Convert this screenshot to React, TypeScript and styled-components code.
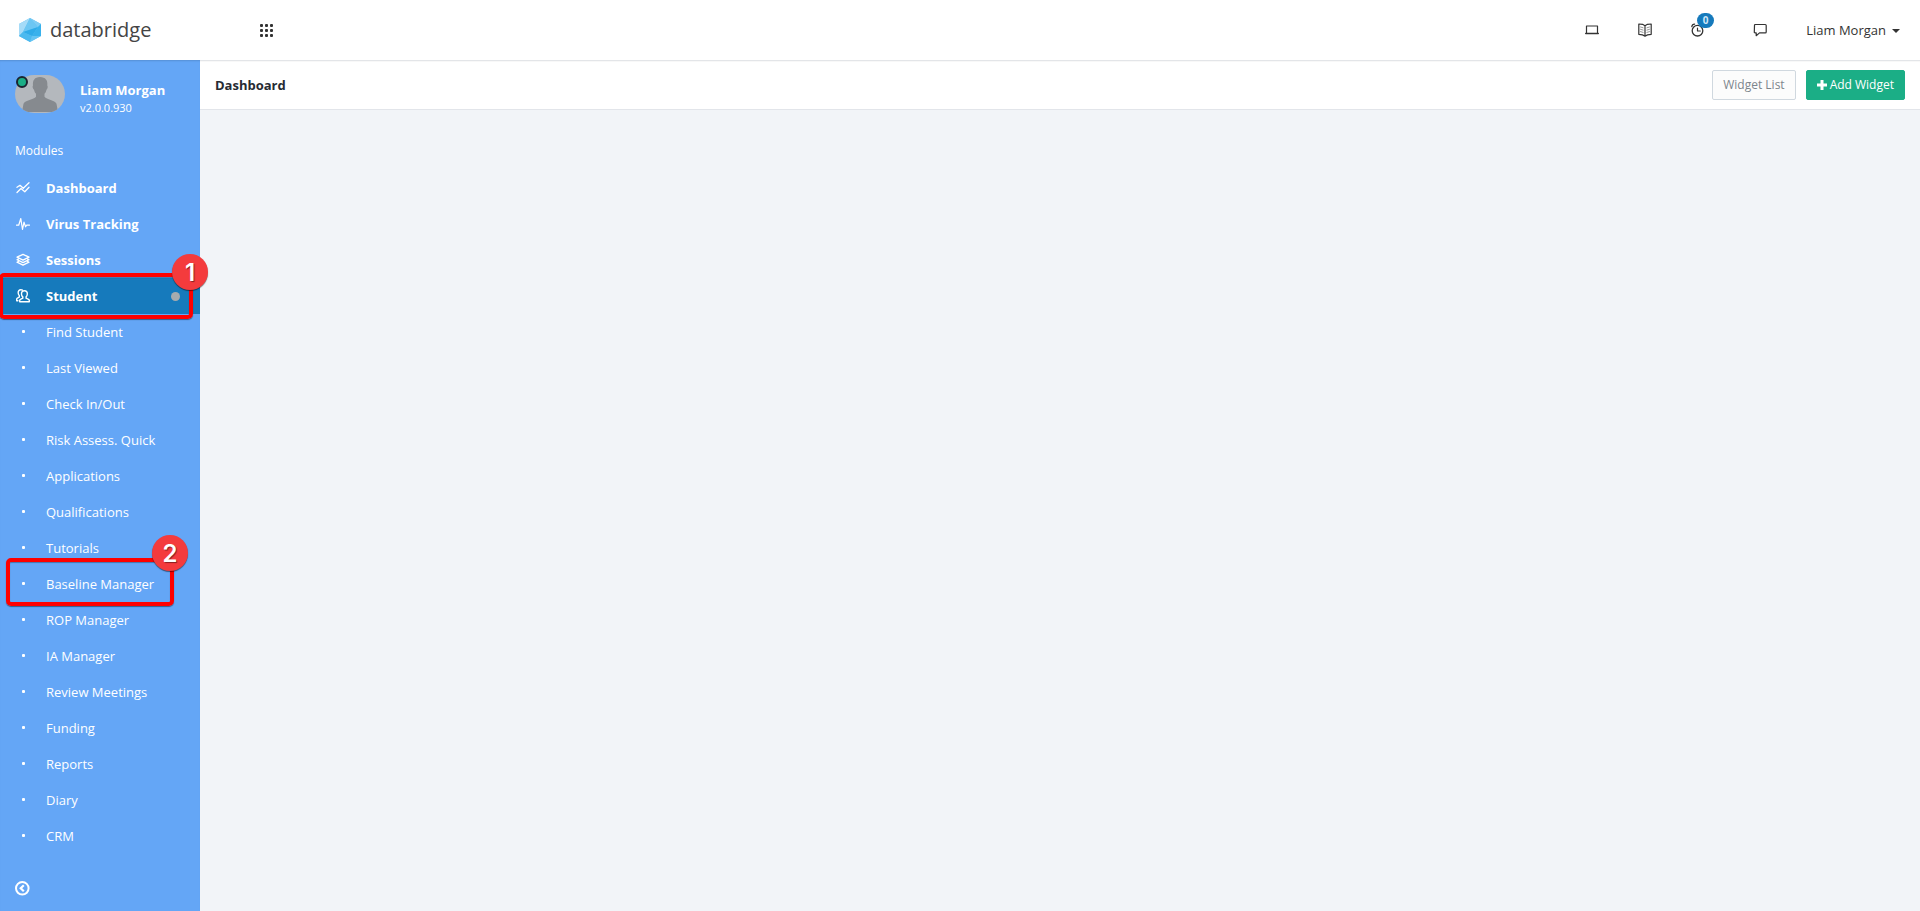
import React from 'react';
import styled, { createGlobalStyle, css } from 'styled-components';

const GlobalStyle = createGlobalStyle`
  *, *::before, *::after { box-sizing: border-box; }
  body {
    margin: 0;
    background: #f2f4f8;
    color: #333;
    font: 13px/20px 'Open Sans', 'Noto Sans', sans-serif;
  }
  button { font: inherit; color: inherit; cursor: pointer; }
  a { color: inherit; text-decoration: none; }
  svg { display: block; flex: none; }
`;

const Page = styled.div`
  display: flex;
  flex-direction: column;
  min-height: 100vh;
`;

const Header = styled.header`
  display: flex;
  align-items: center;
  height: 60px;
  padding-right: 20px;
  background: #fff;
`;

const Brand = styled.a`
  display: flex;
  align-items: center;
  gap: 8px;
  width: 200px;
  padding-left: 18px;
  font-size: 20px;
  line-height: 28px;
  color: #444;
`;

const IconButton = styled.button`
  display: flex;
  position: relative;
  padding: 0;
  border: 0;
  background: none;
  color: #333;
`;

const AppsButton = styled(IconButton)`
  margin-left: 60px;
`;

const HeaderTools = styled.div`
  display: flex;
  align-items: center;
  gap: 39px;
  margin-left: auto;
`;

const AlertButton = styled(IconButton)`
  margin-right: 9px;
`;

const Counter = styled.span`
  position: absolute;
  left: 6px;
  top: -10px;
  width: 17px;
  height: 15px;
  border-radius: 8px;
  background: #167abc;
  color: #cfe6f7;
  font-size: 10px;
  font-weight: 700;
  line-height: 15px;
  text-align: center;
`;

const UserMenu = styled.button`
  display: flex;
  align-items: center;
  gap: 6px;
  padding: 0;
  border: 0;
  background: none;
`;

const Caret = styled.span`
  margin-top: 2px;
  border: 4px solid transparent;
  border-top-color: currentColor;
  border-bottom: 0;
`;

const Body = styled.div`
  display: flex;
  flex: 1;
`;

const Sidebar = styled.aside`
  display: flex;
  flex-direction: column;
  flex: none;
  width: 200px;
  background: #64a6f6;
  box-shadow: inset 0 2px 2px -1px rgba(0, 0, 0, 0.14);
  color: #fff;
`;

const Profile = styled.div`
  display: flex;
  gap: 15px;
  padding: 15px 15px 0;
`;

const Avatar = styled.div`
  position: relative;
  width: 50px;
  height: 38px;
`;

const Status = styled.span`
  position: absolute;
  left: 1px;
  top: 1px;
  width: 12px;
  height: 12px;
  border: 2px solid #1b2430;
  border-radius: 50%;
  background: #1bae86;
`;

const ProfileText = styled.div`
  padding-top: 5px;
  font-size: 11px;
  line-height: 16px;
`;

const ProfileName = styled.strong`
  display: block;
  font-size: 13px;
  line-height: 20px;
`;

const NavHeading = styled.h2`
  margin: 25px 0 9px;
  padding: 0 15px;
  font-size: 12px;
  font-weight: 400;
  line-height: 20px;
  color: #fff;
`;

const NavList = styled.ul`
  margin: 0;
  padding: 0;
  list-style: none;
`;

const NavItem = styled.li`
  position: relative;
`;

const NavLink = styled.a<{ $module?: boolean; $active?: boolean }>`
  display: flex;
  align-items: center;
  gap: 15px;
  height: 36px;
  padding: 0 20px 0 15px;
  ${(p) => p.$module && css`font-weight: 700;`}
  ${(p) => p.$active && css`background: #167abc;`}
`;

const NavIcon = styled.span`
  display: flex;
  justify-content: center;
  width: 16px;
`;

const Bullet = styled.span`
  width: 3px;
  height: 3px;
  margin-bottom: 2px;
  border-radius: 1px;
  background: #fff;
`;

const ActiveDot = styled.span`
  width: 9px;
  height: 9px;
  margin-left: auto;
  border-radius: 50%;
  background: #a7abae;
`;

const Callout = styled.span<{ $left: number; $width: number; $top: number; $height: number }>`
  position: absolute;
  z-index: 2;
  left: ${(p) => p.$left}px;
  top: ${(p) => p.$top}px;
  width: ${(p) => p.$width}px;
  height: ${(p) => p.$height}px;
  border: 4px solid #fe0000;
  border-radius: 5px;
  box-shadow: 0 1px 1px rgba(0, 0, 0, 0.45), inset 0 1px 1px rgba(0, 0, 0, 0.3);
  pointer-events: none;
`;

const CalloutNumber = styled.span<{ $left: number; $top: number }>`
  position: absolute;
  z-index: 3;
  left: ${(p) => p.$left}px;
  top: ${(p) => p.$top}px;
  width: 36px;
  height: 36px;
  border-radius: 50%;
  background: #f43b3d;
  box-shadow: 0 1px 1px rgba(0, 0, 0, 0.5);
  color: #fff;
  font: 600 24px/38px Inter, 'Liberation Sans', sans-serif;
  text-align: center;
  text-shadow: 1px 1px 1px rgba(0, 0, 0, 0.45);
  pointer-events: none;
`;

const SidebarFooter = styled.div`
  display: flex;
  margin-top: auto;
  padding: 15px;
`;

const CollapseButton = styled(IconButton)`
  color: #fff;
`;

const Main = styled.main`
  flex: 1;
  min-width: 0;
`;

const TitleBar = styled.div`
  display: flex;
  align-items: center;
  gap: 10px;
  height: 50px;
  padding: 0 15px;
  border-top: 1px solid #e3e5e8;
  border-bottom: 1px solid #e2e5ea;
  background: #fff;
  box-shadow: inset 0 1px 1px rgba(0, 0, 0, 0.03);
`;

const Title = styled.h1`
  margin: 0 auto 0 0;
  font-size: 13px;
  line-height: 20px;
  color: #262b33;
`;

const Button = styled.button<{ $primary?: boolean }>`
  display: flex;
  align-items: center;
  gap: 3px;
  height: 30px;
  padding: 0 10px;
  border: 1px solid ${(p) => (p.$primary ? '#1bae86' : '#d0d8df')};
  border-radius: 2px;
  background: ${(p) => (p.$primary ? '#1bae86' : '#fcfcfc')};
  color: ${(p) => (p.$primary ? '#fff' : '#7d858c')};
  font-size: 12px;
`;

const line = { fill: 'none', stroke: 'currentColor', strokeLinejoin: 'round', strokeLinecap: 'round' } as const;

const Logo = () => (
  <svg width="24" height="26" viewBox="0 0 24 26" aria-hidden="true">
    <path d="M12 1 23 7v12l-11 6L1 19V7z" fill="#5bc0f1" />
    <path d="M12 1 1 7v12l4-4z" fill="#a5dbf8" />
    <path d="M12 1 5 15l15-5z" fill="#6cc6f3" />
    <path d="M12 1 23 7l-3 3z" fill="#7fccf4" />
    <path d="M5 15 20 10l-6 9z" fill="#2fabe9" />
    <path d="M5 15 1 19l11 6 2-6z" fill="#4bb9ef" />
    <path d="M20 10 23 7v12l-9 0z" fill="#38b1ec" />
    <path d="M14 19h9l-11 6z" fill="#64c4f3" />
  </svg>
);

const AppsIcon = () => (
  <svg width="13" height="13" viewBox="0 0 13 13" fill="#333" aria-hidden="true">
    {[0, 5, 10].map((y) => [0, 5, 10].map((x) => <rect key={`${x}-${y}`} x={x} y={y} width="3" height="3" rx="1" />))}
  </svg>
);

const ScreenIcon = () => (
  <svg width="14" height="14" viewBox="0 0 14 14" aria-hidden="true" {...line}>
    <path d="M1.500 3h11v7.500h-11z" strokeWidth="1.200" />
    <path d="M.7 10.500h12.600" strokeWidth="1.400" />
  </svg>
);

const BookIcon = () => (
  <svg width="14" height="14" viewBox="0 0 14 14" aria-hidden="true" {...line}>
    <path d="M7 2.800 4.500 1.300.8 1v10.300l3.700.6L7 13.200l2.500-1.300 3.700-.6V1l-3.700.3zM7 3v10" strokeWidth="1.200" />
    <path d="M2.500 4l2.600.8M2.500 6.300l2.600.8M2.500 8.600l2.600.8M11.500 4l-2.600.8M11.500 6.300l-2.600.8M11.500 8.600l-2.600.8" strokeWidth=".5" />
  </svg>
);

const ClockIcon = () => (
  <svg width="14" height="14" viewBox="0 0 14 14" aria-hidden="true" {...line}>
    <circle cx="6.500" cy="7.700" r="5.300" strokeWidth="1.300" />
    <path d="M6.500 5v3h2.800M.8 3.700C1 2.200 2 1.200 3.600 1.100M9.400 1.100c1.600.1 2.600 1.100 2.800 2.600" strokeWidth="1.200" />
  </svg>
);

const ChatIcon = () => (
  <svg width="14" height="14" viewBox="0 0 14 14" aria-hidden="true" {...line}>
    <path d="M2.300 1.500h10q.9 0 .9.900v6.600q0 .9-.9.900H6.500L3.200 12.700V9.900H2.100q-.9 0-.8-.9l.2-6.600q0-.9.8-.9z" strokeWidth="1.200" />
  </svg>
);

const ChartIcon = () => (
  <svg width="14" height="14" viewBox="0 0 14 14" aria-hidden="true" {...line}>
    <path d="M1 6.300 4 4.300 7.300 7.300 13 1.700M1 11.500 5 7.500 8.800 10.700 13 6.300" strokeWidth="1.300" />
  </svg>
);

const PulseIcon = () => (
  <svg width="14" height="14" viewBox="0 0 14 14" aria-hidden="true" {...line}>
    <path d="M.5 8.200h2.200L4.800 1.500 6.500 12.500 8 5.200l1.600 4.600 1-1.600h2.900" strokeWidth="1.200" />
  </svg>
);

const LayersIcon = () => (
  <svg width="14" height="14" viewBox="0 0 14 14" aria-hidden="true" {...line}>
    <path d="M7 1.300 13 4.200 7 7.200 1 4.200z" strokeWidth="1.300" />
    <path d="M2.500 5.900 1 6.700l6 3 6-3-1.500-.8M2.500 8.400 1 9.200l6 3 6-3-1.500-.8" strokeWidth="1.300" />
  </svg>
);

const StudentIcon = () => (
  <svg width="14" height="14" viewBox="0 0 14 14" aria-hidden="true" {...line}>
    <path d="M8.400 1.700c2.100 0 3.100 1.500 2.900 3.500-.1 1.300-.6 2.200-1.200 2.700v1.300l2.500 1.100q.7.400.7 1.200v1.200H3.700v-1.200q0-.8.700-1.200l2.400-1.100V7.900C6.100 7.400 5.600 6.500 5.500 5.200 5.300 3.200 6.300 1.700 8.400 1.700z" strokeWidth="1.400" />
    <path d="M6.500 1.200C6 .9 5.500.8 4.900.8 3 .8 2 2.100 2.200 4c.1 1.200.5 2 1.100 2.500v1.600l-1.900 1q-.7.400-.7 1.200v1.400h1.200" strokeWidth="1.400" />
  </svg>
);

const CollapseIcon = () => (
  <svg width="15" height="15" viewBox="0 0 15 15" aria-hidden="true" {...line}>
    <circle cx="7.300" cy="7.300" r="6.300" strokeWidth="2" />
    <path d="M8.800 4.300 5.700 7.300l3.100 3" strokeWidth="2.200" strokeLinecap="butt" strokeLinejoin="miter" />
  </svg>
);

const PlusIcon = () => (
  <svg width="10" height="10" viewBox="0 0 10 10" aria-hidden="true">
    <path d="M3.500 0h3v3.500H10v3H6.500V10h-3V6.500H0v-3h3.500z" fill="currentColor" />
  </svg>
);

const Silhouette = () => (
  <svg width="50" height="38" viewBox="0 0 50 38" role="img" aria-label="Profile picture">
    <clipPath id="avatar"><rect width="50" height="38" rx="19" /></clipPath>
    <g clipPath="url(#avatar)">
      <rect width="50" height="38" fill="#b4b8bd" />
      <path d="M25 2c-5.500 0-7.500 3.500-7 8.500-.8.400-.3 3.500 1 4.200.5 2 1 3 2 4v3c-2 2.500-11 3.500-12.500 7L7 37h36l-1.500-8.300c-1.500-3.500-10-4.500-12-7v-3c1-1 1.500-2 2-4 1.300-.7 1.500-3.800.8-4.200C33 5.500 30.500 2 25 2z" fill="#868a8f" />
    </g>
  </svg>
);

const modules = [
  { label: 'Dashboard', Icon: ChartIcon },
  { label: 'Virus Tracking', Icon: PulseIcon },
  { label: 'Sessions', Icon: LayersIcon },
];

const studentPages = [
  'Find Student', 'Last Viewed', 'Check In/Out', 'Risk Assess. Quick', 'Applications',
  'Qualifications', 'Tutorials', 'Baseline Manager', 'ROP Manager', 'IA Manager',
  'Review Meetings', 'Funding', 'Reports', 'Diary', 'CRM',
];

export default function App() {
  return (
    <Page>
      <GlobalStyle />
      <Header>
        <Brand href="#"><Logo />databridge</Brand>
        <AppsButton aria-label="Apps"><AppsIcon /></AppsButton>
        <HeaderTools>
          <IconButton aria-label="Screen"><ScreenIcon /></IconButton>
          <IconButton aria-label="Guide"><BookIcon /></IconButton>
          <AlertButton aria-label="Reminders"><ClockIcon /><Counter>0</Counter></AlertButton>
          <IconButton aria-label="Messages"><ChatIcon /></IconButton>
          <UserMenu>Liam Morgan<Caret /></UserMenu>
        </HeaderTools>
      </Header>
      <Body>
        <Sidebar>
          <Profile>
            <Avatar><Silhouette /><Status /></Avatar>
            <ProfileText>
              <ProfileName>Liam Morgan</ProfileName>
              v2.0.0.930
            </ProfileText>
          </Profile>
          <nav aria-label="Modules">
            <NavHeading>Modules</NavHeading>
            <NavList>
              {modules.map(({ label, Icon }) => (
                <NavItem key={label}>
                  <NavLink href="#" $module><NavIcon><Icon /></NavIcon>{label}</NavLink>
                </NavItem>
              ))}
              <NavItem>
                <NavLink href="#" $module $active>
                  <NavIcon><StudentIcon /></NavIcon>Student<ActiveDot />
                </NavLink>
                <Callout $left={-1} $top={-5} $width={194} $height={46} />
                <CalloutNumber $left={172} $top={-24}>1</CalloutNumber>
              </NavItem>
              {studentPages.map((label) => (
                <NavItem key={label}>
                  <NavLink href="#"><NavIcon><Bullet /></NavIcon>{label}</NavLink>
                  {label === 'Baseline Manager' && (
                    <>
                      <Callout $left={6} $top={-8} $width={168} $height={48} />
                      <CalloutNumber $left={152} $top={-31}>2</CalloutNumber>
                    </>
                  )}
                </NavItem>
              ))}
            </NavList>
          </nav>
          <SidebarFooter>
            <CollapseButton aria-label="Collapse menu"><CollapseIcon /></CollapseButton>
          </SidebarFooter>
        </Sidebar>
        <Main>
          <TitleBar>
            <Title>Dashboard</Title>
            <Button>Widget List</Button>
            <Button $primary><PlusIcon />Add Widget</Button>
          </TitleBar>
        </Main>
      </Body>
    </Page>
  );
}
